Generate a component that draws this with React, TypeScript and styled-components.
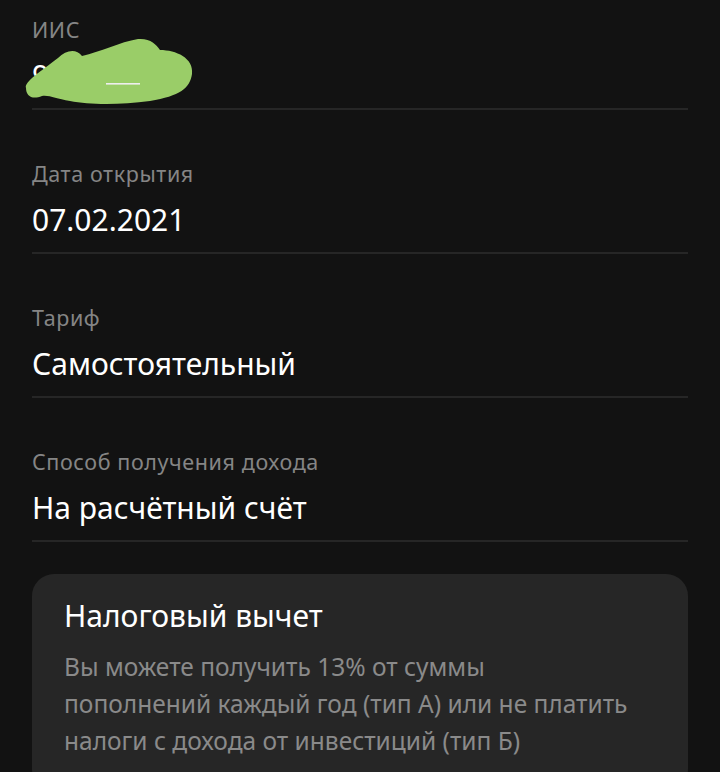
import React from 'react';
import styled, { createGlobalStyle } from 'styled-components';

const GlobalStyle = createGlobalStyle`
	html, body {
		margin: 0;
		padding: 0;
		background: #121212;
	}
	body {
		font-family: 'Noto Sans', 'Open Sans', sans-serif;
		color: #fff;
	}
`;

const rows = [
	{ label: 'ИИС', value: '9012345', hidden: true },
	{ label: 'Дата открытия', value: '07.02.2021' },
	{ label: 'Тариф', value: 'Самостоятельный' },
	{ label: 'Способ получения дохода', value: 'На расчётный счёт' },
];

function App() {
	return (
		<Page>
			<GlobalStyle />
			{rows.map((row, i) => (
				<Row key={row.label} $first={i === 0}>
					<Label>{row.label}</Label>
					<Value>
						{row.value}
						{row.hidden && (
							<Scribble viewBox='0 0 180 70' aria-hidden>
								<path
									d='M 6 52 C 4 46, 20 36, 38 22 C 46 14, 56 12, 62 20 C 80 16, 100 6, 118 3 C 130 2, 136 8, 140 14 C 156 14, 174 22, 172 38 C 170 52, 160 60, 130 65 C 100 69, 70 69, 50 65 C 36 63, 30 59, 22 60 C 12 64, 6 60, 6 52 Z'
									fill='#9acd68'
								/>
								<rect x='86' y='47' width='34' height='1.6' fill='#eeeeee' />
							</Scribble>
						)}
					</Value>
				</Row>
			))}
			<Card>
				<CardTitle>Налоговый вычет</CardTitle>
				<CardText>
					Вы можете получить 13% от суммы
					<br />
					пополнений каждый год (тип А) или не платить
					<br />
					налоги с дохода от инвестиций (тип Б)
				</CardText>
			</Card>
		</Page>
	);
}

const Page = styled.div`
	padding: 0 32px;
	height: 772px;
	overflow: hidden;
	box-sizing: border-box;
`;

const Row = styled.div<{ $first?: boolean }>`
	display: flex;
	flex-direction: column;
	gap: 12px;
	padding-top: ${(p) => (p.$first ? '16px' : '50px')};
	padding-bottom: 12px;
	border-bottom: 2px solid #262626;
`;

const Label = styled.div`
	font-size: 21.5px;
	line-height: 28px;
	letter-spacing: 0.6px;
	color: #858585;
`;

const Value = styled.div`
	position: relative;
	font-size: 30px;
	line-height: 40px;
	color: #fff;
`;

const Scribble = styled.svg`
	position: absolute;
	left: -12px;
	top: -20px;
	width: 180px;
	height: 70px;
`;

const Card = styled.div`
	margin-top: 32px;
	background: #262626;
	border-radius: 22px;
	padding: 22px 24px 32px 32px;
	display: flex;
	flex-direction: column;
	gap: 12px;
`;

const CardTitle = styled.div`
	font-size: 30px;
	line-height: 40px;
	color: #fff;
`;

const CardText = styled.div`
	font-size: 24.5px;
	line-height: 37px;
	color: #8a8a8a;
	white-space: nowrap;
`;

export default App;
